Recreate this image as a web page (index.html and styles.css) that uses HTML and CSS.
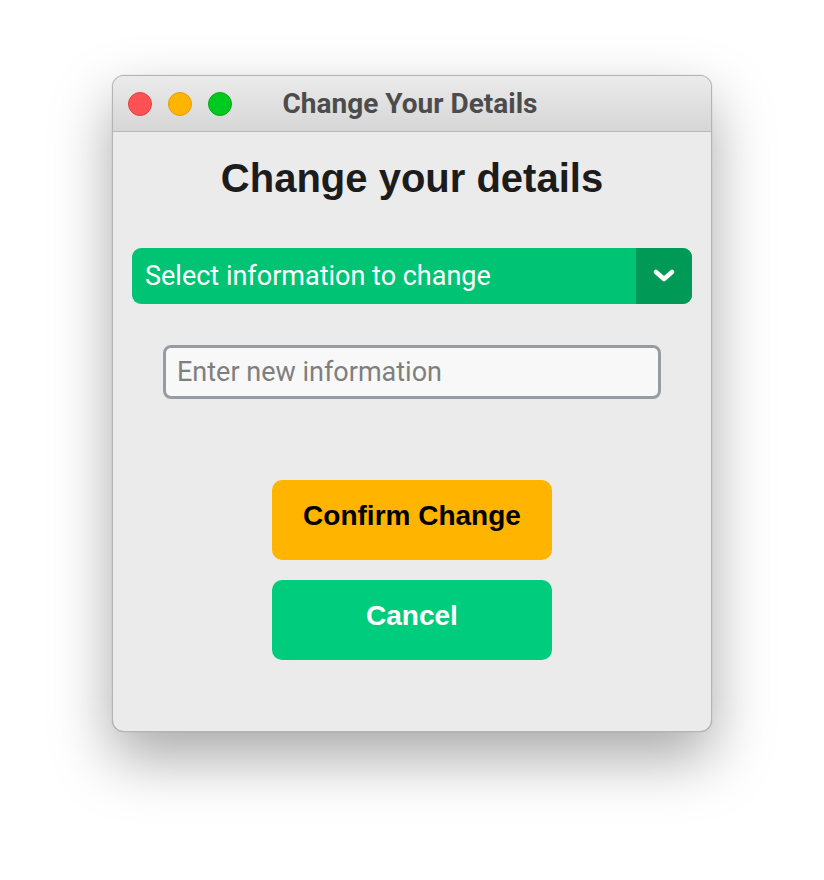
FILE: index.html
```html
<!DOCTYPE html>
<html lang="en">
<head>
  <meta charset="UTF-8">
  <title>Change Your Details</title>
  <link rel="stylesheet" href="styles.css">
</head>
<body>
  <div class="window">
    <!-- title bar -->
    <div class="titlebar">
      <div class="lights">
        <span class="light red"></span>
        <span class="light yellow"></span>
        <span class="light green"></span>
      </div>
      <div class="title">Change Your Details</div>
    </div>

    <!-- form -->
    <div class="content">
      <h1>Change your details</h1>

      <div class="select">
        <span class="select-label">Select information to change</span>
        <span class="select-arrow">
          <svg width="22" height="14" viewBox="0 0 22 14">
            <polyline points="3,3 11,10 19,3" fill="none" stroke="#fff" stroke-width="4.5" stroke-linecap="round" stroke-linejoin="round"/>
          </svg>
        </span>
      </div>

      <input class="info-input" type="text" placeholder="Enter new information">

      <div class="actions">
        <button class="btn btn-confirm">Confirm Change</button>
        <button class="btn btn-cancel">Cancel</button>
      </div>
    </div>
  </div>
</body>
</html>
```

FILE: styles.css
```css
/* page around the window */
body {
  margin: 0;
  padding: 75px 0 0 112px;
  background: #ffffff;
  min-height: 880px;
  box-sizing: border-box;
}

/* the window */
.window {
  width: 600px;
  height: 657px;
  box-sizing: border-box;
  background: #ebebeb;
  border: 1px solid #b4b4b4;
  border-radius: 12px;
  overflow: hidden;
  box-shadow: 0 26px 60px rgba(0, 0, 0, 0.34), 0 0 1px rgba(0, 0, 0, 0.3);
}

/* title bar */
.titlebar {
  height: 55px;
  display: flex;
  align-items: center;
  background: linear-gradient(#ebebeb, #d6d6d6);
  border-bottom: 1px solid #b9b9b9;
}
.lights {
  display: flex;
  gap: 16px;
  padding-left: 15px;
}
.light {
  width: 24px;
  height: 24px;
  border-radius: 50%;
  box-sizing: border-box;
}
.red { background: #ff5153; border: 1px solid #e3403f; }
.yellow { background: #ffb500; border: 1px solid #e09d00; }
.green { background: #00ca1f; border: 1px solid #00ad14; }
.title {
  flex: 1;
  text-align: center;
  margin-right: 123px;
  font-family: Roboto, "Liberation Sans", sans-serif;
  font-weight: 700;
  font-size: 28px;
  color: #4c4c4c;
}

/* form area */
.content {
  display: flex;
  flex-direction: column;
  align-items: center;
  padding-top: 23px;
}
.content h1 {
  margin: 0;
  font-family: "Liberation Sans", Arial, sans-serif;
  font-weight: 700;
  font-size: 40px;
  line-height: 46px;
  color: #1c1c1c;
}

.select {
  margin-top: 47px;
  width: 560px;
  height: 56px;
  display: flex;
  border-radius: 9px;
  overflow: hidden;
  background: #00c373;
}
.select-label {
  flex: 1;
  display: flex;
  align-items: center;
  padding-left: 13px;
  font-family: Roboto, "Liberation Sans", sans-serif;
  font-size: 27px;
  color: #ffffff;
}
.select-arrow {
  width: 56px;
  display: flex;
  align-items: center;
  justify-content: center;
  background: #009a56;
}

.info-input {
  margin-top: 41px;
  width: 498px;
  height: 54px;
  box-sizing: border-box;
  border: 3px solid #979ca2;
  border-radius: 8px;
  background: #f8f8f8;
  padding: 0 11px;
  font-family: Roboto, "Liberation Sans", sans-serif;
  font-size: 27px;
  outline: none;
}
.info-input::placeholder {
  color: #7f7f7f;
}

/* buttons */
.actions {
  margin-top: 81px;
  display: flex;
  flex-direction: column;
  gap: 20px;
}
.btn {
  width: 280px;
  height: 80px;
  border: none;
  border-radius: 10px;
  font-family: "Liberation Sans", Arial, sans-serif;
  font-weight: 700;
  font-size: 28px;
  padding: 0 0 8px;
}
.btn-confirm {
  background: #ffb400;
  color: #000000;
}
.btn-cancel {
  background: #00cc7e;
  color: #ffffff;
}
```
